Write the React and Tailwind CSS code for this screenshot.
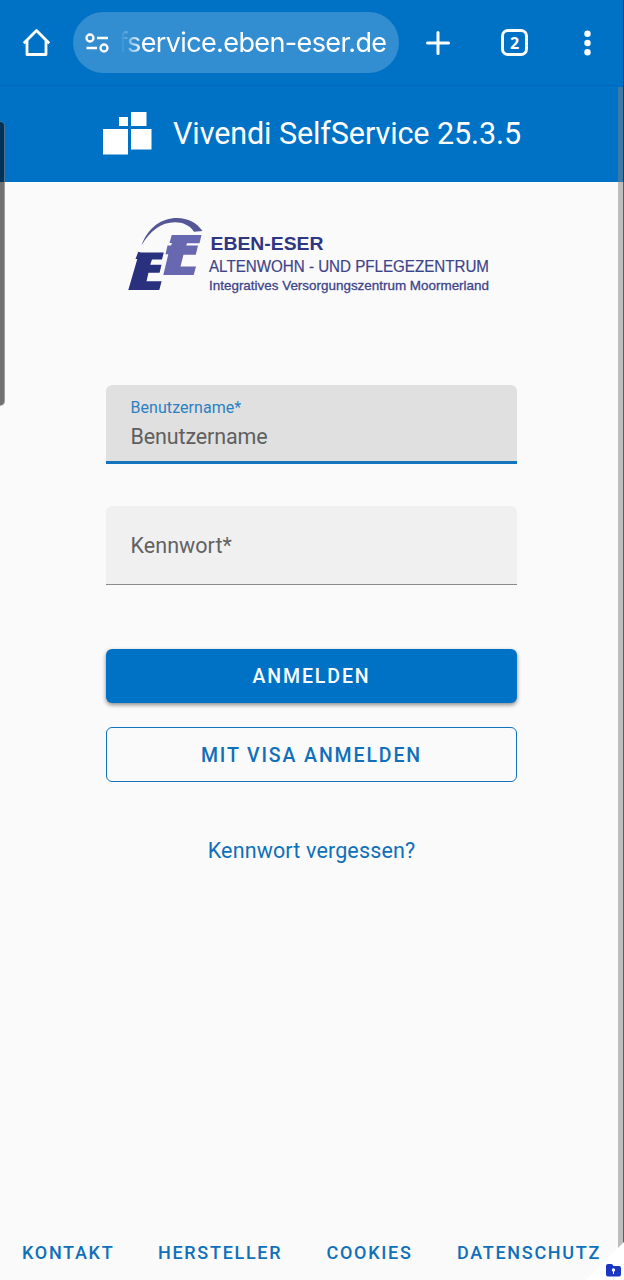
import React, { useState } from 'react';

const footerLinks = [
    { label: 'Kontakt', className: 'ml-[22px] w-[136px]' },
    { label: 'Hersteller', className: 'w-[168.5px]' },
    { label: 'Cookies', className: 'w-[130.5px]' },
    { label: 'Datenschutz', className: '' },
];

const HomeIcon = () => (
    <svg width="30" height="30" viewBox="0 0 30 30" fill="none" stroke="white" strokeWidth="2.8" strokeLinejoin="round">
        <path d="M2.800 15.200 15.500 2.500 28.200 15.200" />
        <path d="M6 12.500V26.500h19V12.500" />
    </svg>
);

const SiteSettingsIcon = () => (
    <svg width="24" height="20" viewBox="0 0 24 20" fill="none" stroke="white" strokeWidth="2.3">
        <circle cx="5" cy="5" r="3.5" />
        <path d="M12 5h11M1.500 15h10.500" />
        <circle cx="19" cy="15" r="3.5" />
    </svg>
);

const BrowserBar = () => (
    <header className="relative flex h-[86px] shrink-0 items-center border-b border-[#0069bb] bg-[#0072c6] pl-[21px]">
        <HomeIcon />
        <div className="ml-[22px] flex h-[61px] w-[326px] items-center rounded-full bg-[#338ed1] pl-[11.5px]">
            <SiteSettingsIcon />
            <div className="ml-[9px] mt-[1px] flex w-[269px] justify-end whitespace-nowrap font-['Inter',sans-serif] text-[27px] leading-[40px] tracking-[-0.62px] text-white [mask-image:linear-gradient(to_right,transparent_3px,black_24px)]">
                fservice.eben-eser.de
            </div>
        </div>
        <svg className="ml-[26px]" width="26" height="26" viewBox="0 0 26 26" stroke="white" strokeWidth="3" strokeLinecap="round">
            <path d="M13 2.500v21M2.500 13h21" />
        </svg>
        <div className="ml-[50px] flex h-[27px] w-[27px] items-center justify-center rounded-[7px] border-[3px] border-white font-['Open_Sans',sans-serif] text-[16px] font-bold leading-none text-white">
            2
        </div>
        <svg className="ml-[55px]" width="8" height="26" viewBox="0 0 8 26" fill="white">
            <circle cx="4.500" cy="3.800" r="3.200" />
            <circle cx="4.500" cy="13" r="3.200" />
            <circle cx="4.500" cy="22.200" r="3.200" />
        </svg>
    </header>
);

const AppHeader = () => (
    <div className="flex h-[96px] shrink-0 items-center bg-[#0072c6] pl-[103px] text-white">
        <svg width="49" height="44" viewBox="0 0 49 44" fill="white">
            <rect x="0" y="17" width="25" height="25.500" />
            <rect x="16" y="5" width="9" height="9" />
            <rect x="28" y="0" width="15.500" height="14" />
            <rect x="28" y="17" width="20.500" height="20.500" />
        </svg>
        <h1 className="ml-[21px] whitespace-nowrap text-[30.5px] leading-[40px] tracking-[-0.09px]">Vivendi SelfService 25.3.5</h1>
    </div>
);

const EbenEserLogo = () => (
    <svg className="ml-[123px] mt-[28px] shrink-0 overflow-visible" width="380" height="90" viewBox="0 0 380 90" fontFamily="'Liberation Sans', Arial, sans-serif">
        <path d="M18.500 35.500C25 17 39 8 54 8c11 0 20 5 25.500 13l-8.500.8C67 15.500 60 12.300 52 12.300 38 12.300 27 21 18.500 35.500Z" fill="#555698" />
        <path d="M48.700 25H78.500l-2 8.300H64l-.8 2.200H75l-2.200 9.200H60.500L57.500 56.500H73L70.700 65H40.300L45.300 44.300H42.500L44.500 35.500H48L49 33H46.500Z" fill="#6868b0" />
        <path d="M15.300 41.700 18 42.500H40.800L39 49.400H29L27.200 54.800H38.500L36.600 62.700H25.500L23.500 71.300H38.600L36.300 80H5.300L14.300 49H12.500Z" fill="#29317f" />
        <text x="87.500" y="40" fontSize="18.500" fontWeight="bold" fill="#2f3683" textLength="113" lengthAdjust="spacingAndGlyphs">EBEN-ESER</text>
        <text x="86" y="62" fontSize="16" fill="#3e4489" stroke="#3e4489" strokeWidth="0.2" textLength="280" lengthAdjust="spacingAndGlyphs">ALTENWOHN - UND PFLEGEZENTRUM</text>
        <text x="86" y="79.500" fontSize="13.500" fill="#3e4489" stroke="#3e4489" strokeWidth="0.300" textLength="280" lengthAdjust="spacingAndGlyphs">Integratives Versorgungszentrum Moormerland</text>
    </svg>
);

const LoginForm = () => {
    const [formData, setFormData] = useState({ username: '', password: '' });

    const handleChange = (e) => {
        const { name, value } = e.target;
        setFormData(prev => ({ ...prev, [name]: value }));
    };

    return (
        <form onSubmit={(e) => e.preventDefault()} className="ml-[106px] mt-[85px] flex w-[411px] flex-col">
            <label className="flex h-[79px] flex-col rounded-t-[6px] border-b-[3px] border-[#1474bb] bg-[#e0e0e0] px-[24.5px] pt-[13px]">
                <span className="text-[16px] leading-[20px] tracking-[0.06px] text-[#2b80c2]">Benutzername*</span>
                <input
                    type="text"
                    name="username"
                    value={formData.username}
                    placeholder="Benutzername"
                    onChange={handleChange}
                    className="mt-[4px] h-[30px] w-full bg-transparent text-[21.5px] tracking-[-0.12px] outline-none placeholder:text-[#5f5f5f]"
                />
            </label>
            <input
                type="password"
                name="password"
                value={formData.password}
                placeholder="Kennwort*"
                onChange={handleChange}
                className="mt-[42px] h-[79px] rounded-t-[6px] border-b border-[#8a8a8a] bg-[#f0f0f0] px-[24.5px] text-[21.5px] tracking-[0.05px] outline-none placeholder:text-[#626262]"
            />
            <button type="submit" className="mt-[64px] h-[54px] rounded-[6px] bg-[#0072c6] pt-[2px] text-[19.5px] font-medium tracking-[1.88px] text-white shadow-[0_2px_4px_rgba(0,0,0,0.45)]">
                ANMELDEN
            </button>
            <button type="button" className="mt-[24px] h-[55px] rounded-[6px] border-[1.5px] border-[#1474bb] pt-[2px] text-[19.5px] font-medium tracking-[1.88px] text-[#0f70b9]">
                MIT VISA ANMELDEN
            </button>
            <a href="#" className="mt-[54px] text-center text-[21.5px] leading-[30px] tracking-[0.14px] text-[#0f70b9]">Kennwort vergessen?</a>
        </form>
    );
};

const App = () => {
    return (
        <div className="relative flex h-[1280px] w-[624px] flex-col overflow-hidden bg-[#fafafa] font-['Roboto',sans-serif]">
            <BrowserBar />
            <AppHeader />
            <EbenEserLogo />
            <LoginForm />
            <footer className="mb-[13px] mt-auto flex h-[30px] items-center whitespace-nowrap text-[18px] font-medium uppercase tracking-[1.7px] text-[#0f70b9]">
                {footerLinks.map(link => (
                    <a key={link.label} href="#" className={link.className}>{link.label}</a>
                ))}
            </footer>

            {/* edge panel handle */}
            <div className="absolute left-0 top-[121px] h-[285px] w-[5px] rounded-r-[5px] border-y border-r border-white/30 bg-black/55" />

            {/* scrollbar */}
            <div className="absolute right-0 top-[87px] h-[1163px] w-[6px] bg-[#808080]/50" />
            <div className="absolute right-0 top-0 h-[1250px] w-px bg-black/50" />

            {/* secure folder badge */}
            <svg className="absolute bottom-0 right-0" width="38" height="38" viewBox="0 0 38 38">
                <path d="M0 38 38 0v38Z" fill="white" />
                <path d="M20 24q0-2 2-2h3.500q1 0 2 2H33q2 0 2 2v6.500q0 2-2 2H22q-2 0-2-2Z" fill="#1b36c1" />
                <circle cx="27.500" cy="28" r="1.700" fill="white" />
                <path d="M27 28h1v4h-1Z" fill="white" />
            </svg>
        </div>
    );
};

export default App;
